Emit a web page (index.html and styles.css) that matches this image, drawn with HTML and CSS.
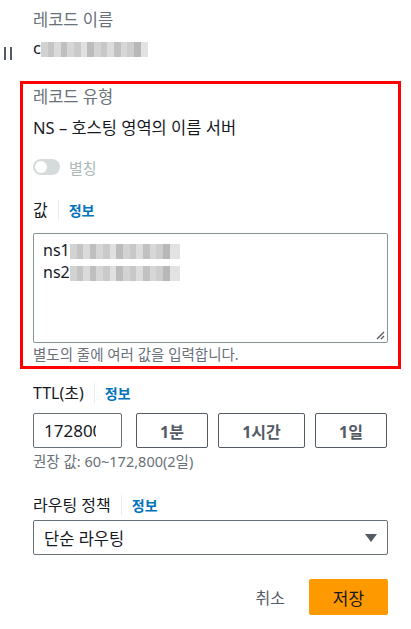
FILE: index.html
```html
<!DOCTYPE html>
<html lang="ko">
<head>
    <meta charset="UTF-8">
    <meta name="viewport" content="width=device-width, initial-scale=1.0">
    <title>레코드 편집</title>
    <link rel="stylesheet" href="styles.css">
</head>
<body>
    <div class="page">
        <div class="gutter">
            <span class="handle"></span>
        </div>

        <div class="form">
            <div class="field">
                <div class="label muted">레코드 이름</div>
                <div class="value">c<span class="blur blur-name"></span></div>
            </div>

            <section class="highlight">
                <div class="label muted">레코드 유형</div>
                <div class="value type">NS – 호스팅 영역의 이름 서버</div>

                <div class="toggle-row">
                    <span class="toggle"><span class="knob"></span></span>
                    <span class="toggle-text">별칭</span>
                </div>

                <div class="label-row">
                    <span class="label-main">값</span>
                    <a class="info" href="#">정보</a>
                </div>
                <div class="textarea">
                    <div class="line">ns1<span class="blur blur-ns"></span></div>
                    <div class="line">ns2<span class="blur blur-ns"></span></div>
                    <svg class="grip" width="9" height="9" viewBox="0 0 9 9">
                        <path d="M1 8 L8 1 M5 8 L8 5" stroke="#545b64" stroke-width="1.4" fill="none"/>
                    </svg>
                </div>
                <div class="hint">별도의 줄에 여러 값을 입력합니다.</div>
            </section>

            <div class="field ttl">
                <div class="label-row">
                    <span class="label-main">TTL(초)</span>
                    <a class="info" href="#">정보</a>
                </div>
                <div class="ttl-row">
                    <div class="input"><span class="input-text">172800</span></div>
                    <button class="btn small">1분</button>
                    <button class="btn wide">1시간</button>
                    <button class="btn small">1일</button>
                </div>
                <div class="hint">권장 값: 60~172,800(2일)</div>
            </div>

            <div class="field routing">
                <div class="label-row">
                    <span class="label-main">라우팅 정책</span>
                    <a class="info" href="#">정보</a>
                </div>
                <div class="select">
                    <span>단순 라우팅</span>
                    <span class="caret"></span>
                </div>
            </div>

            <div class="actions">
                <a class="cancel" href="#">취소</a>
                <button class="primary">저장</button>
            </div>
        </div>
    </div>
</body>
</html>
```

FILE: styles.css
```css
body {
    margin: 0;
    padding: 0;
    background: #ffffff;
    font-family: "Noto Sans", "Noto Sans CJK KR", sans-serif;
    color: #16191f;
}

.page {
    display: flex;
    width: 411px;
}

.gutter {
    width: 33px;
    flex-shrink: 0;
}

.handle {
    display: block;
    width: 8px;
    height: 13px;
    margin: 47px 0 0 4px;
    border-left: 2px solid #545b64;
    border-right: 2px solid #545b64;
    box-sizing: border-box;
}

.form {
    width: 355px;
    padding-top: 9px;
}

.label {
    font-size: 16.5px;
    line-height: 22px;
}

.muted {
    color: #687078;
}

.value {
    font-size: 16.5px;
    line-height: 22px;
    margin-top: 6px;
}

.blur {
    display: inline-block;
    height: 15px;
    vertical-align: -3px;
    background: linear-gradient(90deg,
        #d2d2d2 0 7px, #c4c4c4 7px 13px, #dadada 13px 20px, #bfbfbf 20px 26px,
        #d6d6d6 26px 33px, #cacaca 33px 40px, #e0e0e0 40px 46px, #bcbcbc 46px 53px,
        #d3d3d3 53px 60px, #c8c8c8 60px 66px, #dcdcdc 66px 73px, #c1c1c1 73px 80px,
        #d7d7d7 80px 86px, #cdcdcd 86px 93px, #b8b8b8 93px 100px, #e2e2e2 100px 110px);
}

.blur-name {
    width: 107px;
}

.blur-ns {
    width: 110px;
}

.highlight {
    margin: 22px -13px 0 -13px;
    border: 3px solid #ff0000;
    padding: 2px 10px 3px 10px;
}

.type {
    margin-top: 9px;
}

.toggle-row {
    display: flex;
    align-items: center;
    gap: 9px;
    margin-top: 17px;
    height: 22px;
}

.toggle {
    display: flex;
    align-items: center;
    width: 27px;
    height: 16px;
    border-radius: 8px;
    background: #d5dbdb;
    padding: 0 2px;
    box-sizing: border-box;
}

.knob {
    width: 12px;
    height: 12px;
    border-radius: 50%;
    background: #ffffff;
}

.toggle-text {
    font-size: 15px;
    color: #aab7b8;
}

.label-row {
    display: flex;
    align-items: center;
    height: 22px;
    margin-top: 21px;
}

.label-main {
    font-size: 16px;
    padding-right: 10px;
    border-right: 1px solid #eaeded;
    line-height: 20px;
}

.info {
    font-size: 14px;
    font-weight: bold;
    color: #0073bb;
    text-decoration: none;
    padding-left: 10px;
}

.textarea {
    position: relative;
    height: 110px;
    margin-top: 12px;
    border: 1px solid #879596;
    border-radius: 2px;
    box-sizing: border-box;
    padding: 5px 9px;
    font-size: 16px;
    line-height: 22px;
}

.grip {
    position: absolute;
    right: 2px;
    bottom: 2px;
}

.hint {
    font-size: 14.5px;
    line-height: 18px;
    color: #687078;
    margin-top: 2px;
}

.ttl {
    margin-top: 13px;
}

.ttl .label-row {
    margin-top: 0;
}

.ttl-row {
    display: flex;
    gap: 10px;
    margin-top: 9px;
}

.input {
    width: 89px;
    height: 35px;
    border: 1px solid #687078;
    border-radius: 2px;
    box-sizing: border-box;
    padding: 0 25px 0 10px;
    margin-right: 4px;
}

.input-text {
    display: block;
    overflow: hidden;
    white-space: nowrap;
    font-size: 17px;
    line-height: 33px;
    color: #16191f;
}

.btn {
    height: 35px;
    border: 1px solid #545b64;
    border-radius: 2px;
    background: #ffffff;
    font-family: inherit;
    font-size: 16px;
    font-weight: bold;
    color: #545b64;
    padding: 0;
}

.btn.small {
    width: 72px;
}

.btn.wide {
    width: 87px;
}

.ttl .hint {
    margin-top: 4px;
}

.routing {
    margin-top: 24px;
}

.routing .label-row {
    margin-top: 0;
}

.select {
    display: flex;
    justify-content: space-between;
    align-items: center;
    height: 35px;
    margin-top: 4px;
    border: 1px solid #687078;
    border-radius: 2px;
    box-sizing: border-box;
    padding: 0 10px 0 10px;
    font-size: 16.5px;
}

.caret {
    width: 0;
    height: 0;
    border-left: 6px solid transparent;
    border-right: 6px solid transparent;
    border-top: 8px solid #545b64;
}

.actions {
    display: flex;
    justify-content: flex-end;
    align-items: center;
    gap: 24px;
    margin-top: 24px;
}

.cancel {
    font-size: 16px;
    color: #545b64;
    text-decoration: none;
}

.primary {
    width: 79px;
    height: 36px;
    border: none;
    border-radius: 2px;
    background: #ff9900;
    color: #16191f;
    font-family: inherit;
    font-size: 17px;
    padding: 0;
}
```
